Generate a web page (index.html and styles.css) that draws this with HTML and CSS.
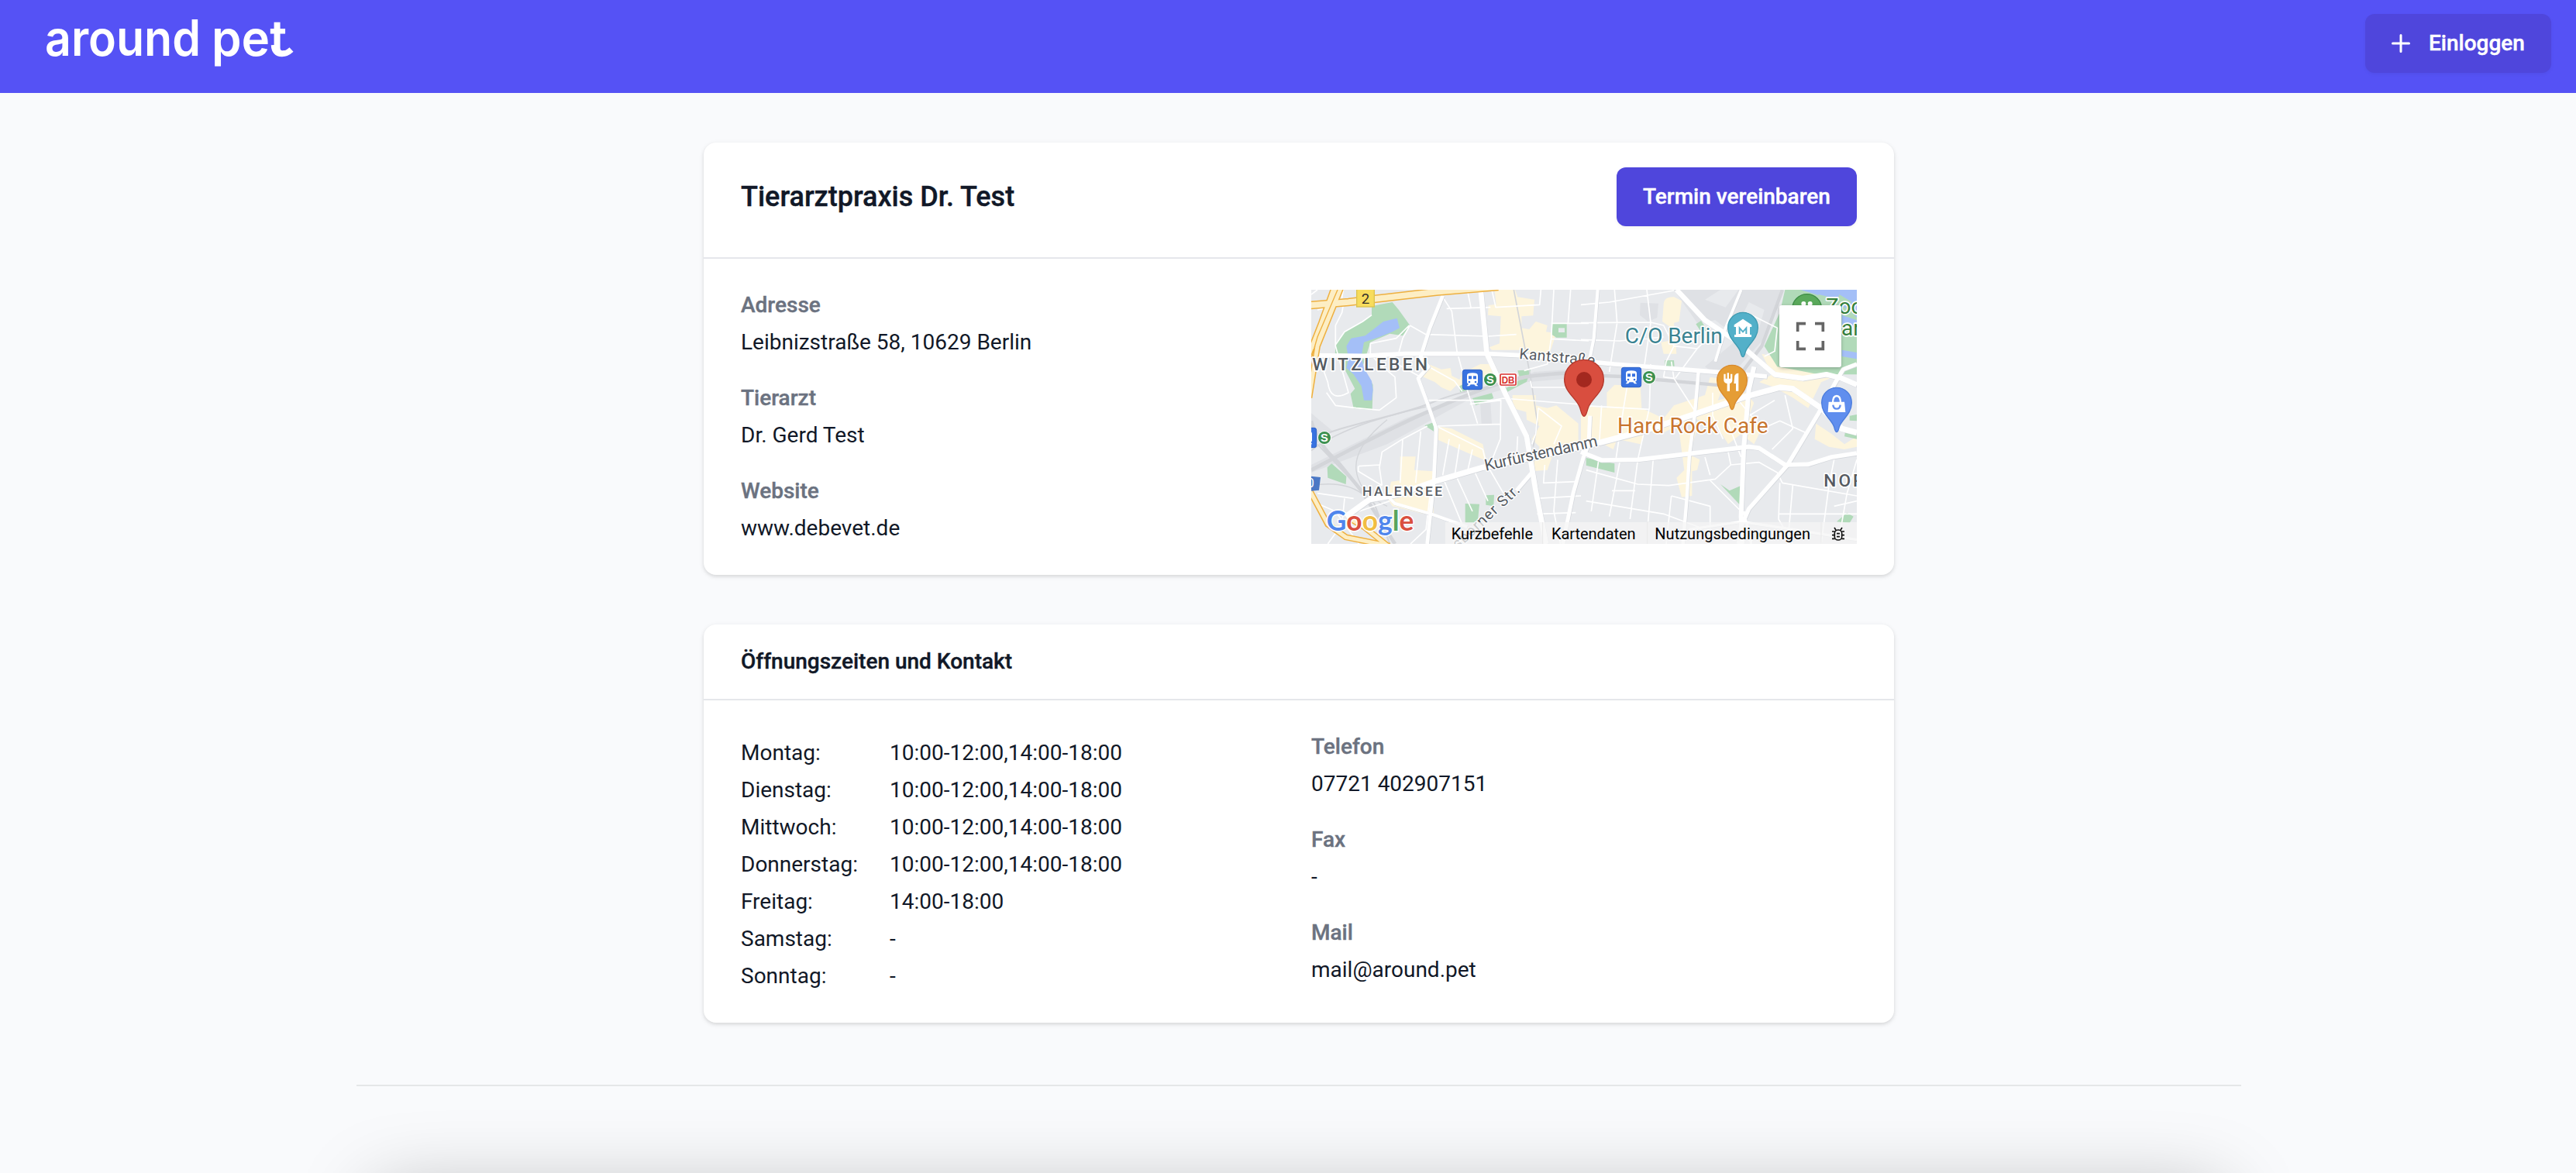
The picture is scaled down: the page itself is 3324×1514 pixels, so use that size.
FILE: index.html
```html
<!DOCTYPE html>
<html lang="de">
<head>
<meta charset="utf-8">
<title>around pet – Tierarztpraxis Dr. Test</title>
<link rel="stylesheet" href="styles.css">
</head>
<body>
<header class="topbar">
  <a class="brand" aria-label="around pet">
    <svg class="brand-logo" viewBox="0 0 340 100">
      <text x="-2" y="72" textLength="201" lengthAdjust="spacingAndGlyphs">around</text>
      <text x="213" y="72" textLength="97" lengthAdjust="spacingAndGlyphs">pet</text>
      <path d="M293.500 58Q294 69 304 69.500Q310 69.500 316 64"/>
    </svg>
  </a>
  <button class="btn btn-login">
    <svg class="plus" viewBox="0 0 24 24"><path d="M12 1.500V22.500M1.500 12H22.500"/></svg>
    Einloggen
  </button>
</header>
<main class="content">
  <section class="card">
    <div class="card-head card-head-main">
      <h1>Tierarztpraxis Dr. Test</h1>
      <button class="btn">Termin vereinbaren</button>
    </div>
    <div class="card-body">
      <dl class="facts">
        <div><dt>Adresse</dt><dd>Leibnizstraße 58, 10629 Berlin</dd></div>
        <div><dt>Tierarzt</dt><dd>Dr. Gerd Test</dd></div>
        <div><dt>Website</dt><dd>www.debevet.de</dd></div>
      </dl>
      <svg class="map" viewBox="36 42 2112 984">
        <defs>
          <path id="pin" d="M0 86C-6 86-7 76-10 66C-18 38-58 18-58-28A58 58 0 0 1 58-28C58 18 18 38 10 66C7 76 6 86 0 86Z"/>
          <g id="rail-stop">
            <rect width="76" height="76" rx="9" fill="#3872e0" stroke="#2a5fc8" stroke-width="3"/>
            <path fill="#fff" fill-rule="evenodd" d="M17 22Q17 12 38 12Q59 12 59 22V48Q59 54 53 55L60 63H50L45 57H31L26 63H16L23 55Q17 54 17 48ZM23 24V36H35V24ZM41 24V36H53V24ZM26 43A4 4 0 1 0 26 51A4 4 0 1 0 26 43ZM50 43A4 4 0 1 0 50 51A4 4 0 1 0 50 43Z"/>
          </g>
          <g id="sbahn">
            <circle r="27" fill="#fff"/><circle r="24" fill="#3c904f"/>
            <text class="s-sign" y="16" text-anchor="middle">S</text>
          </g>
          <path id="mw-b2" d="M20 103L180 90L330 72L520 50L760 30"/>
          <g id="mw-a100">
            <path d="M125 32L75 170L24 300M152 32L60 260L28 460M140 32L40 270"/>
            <path d="M20 800L100 950L170 1000L340 1034M190 930L240 960L330 1032"/>
          </g>
        </defs>
        <rect x="36" y="42" width="2112" height="984" fill="#e8eaed"/>

        <!-- rail yards and built-up blocks -->
        <path fill="#dfe1e5" d="M36 520L120 590L36 650ZM36 720L400 540L900 360L1040 350V385L870 400L640 470L330 640L36 750ZM690 480L730 480L735 560L695 560Z"/>
        <path fill="#dfe1e5" d="M1440 42H1860L1800 220L1700 330L1640 400L1560 340L1690 230L1600 160L1530 170Z"/>
        <path fill="#e8eaed" d="M1560 80L1640 110L1690 42H1620ZM1730 90L1790 120L1770 190L1700 150Z"/>
        <path fill="#dfe1e5" d="M1310 92L1380 95L1375 150L1340 165L1308 140Z"/>
        <g fill="#fdf5dd">
          <path d="M745 42H825L835 70L900 80L895 142L850 145L850 190L880 195L905 165L950 180L945 205L985 210L965 270L950 300L840 275H735L725 265L765 250L770 145L720 140L722 102L752 98Z"/>
          <path d="M490 330L540 350L575 345L580 375L610 390L620 365L690 330L725 330L740 370L700 380L700 435L620 430L600 410L575 435L540 420L515 400L460 375Z"/>
          <path d="M815 450H905V490L950 500L985 490L1070 560V640L985 640L950 740L885 745L920 650L890 620L920 570L870 545L868 515L815 500Z"/>
          <path d="M520 570L580 580L700 640L715 705L610 660L520 620ZM380 688H440L435 740L510 745V905L470 910L350 880L330 850L345 785L380 780Z"/>
          <path d="M1400 100Q1400 68 1440 70L1470 85L1460 165L1440 170L1450 290L1400 290L1390 245L1420 240L1430 190L1395 165Z"/>
          <path d="M1180 500V440L1210 410L1310 415L1315 500L1400 540L1440 490L1560 450L1580 380L1640 390L1610 470L1720 440L1750 480L1730 530L1780 580L1750 640L1700 600L1650 640L1600 560L1510 540L1390 600L1330 590L1310 640L1220 620L1205 660L1150 630L1080 650V490Z"/>
          <path d="M1460 590L1530 580L1500 680L1540 700L1530 740L1510 745L1510 840L1470 845L1450 770L1480 740Z"/>
          <path d="M1780 290L1870 310L1930 345L2080 370L2010 400L1960 500L1900 460L1830 420L1770 400L1820 370Z"/>
          <path d="M1990 560L2050 600L2100 640L2148 610V650L2100 660L2040 650L1985 620Z"/>
        </g>
        <g fill="#b1dab9">
          <path d="M270 105L350 90L375 120L418 180L390 220L340 212L265 245L235 340L275 410L272 508L200 502L188 445L205 425L160 340L128 300L130 250L165 205L235 165L270 140Z"/>
          <path d="M970 174H1025V227H985L967 215Z"/>
          <path d="M610 415L650 395L650 430L612 438ZM660 462L735 442L742 462L672 490ZM835 355L885 352L870 398L790 440L780 430L845 390ZM475 568L510 555V590ZM98 730L115 715L172 765L170 795L100 770ZM632 870L687 872L680 945H632ZM712 838L744 836L742 880L712 875Z"/>
          <path d="M1405 315H1440L1442 338H1405ZM1525 175L1545 162L1570 200L1545 205ZM1100 693L1210 715L1210 750L1100 722ZM1620 795L1655 820L1700 800V880ZM1850 130L1870 42H2148V370L2000 370L1900 350L1840 340L1790 260ZM2105 580L2148 590V620L2100 610ZM2120 530L2148 525V550L2120 548ZM2070 940L2110 905L2135 920L2120 945Z"/>
        </g>
        <g fill="#a4bff7">
          <path d="M368 152L378 190L350 205L300 225L240 245L230 300L240 345L270 395L275 430L270 470L240 470L230 415L200 370L172 345L180 310L172 260L190 230L245 220L315 165Z"/>
          <path d="M1930 42H2148V150L2120 120L2040 80L1990 60ZM2090 140L2148 160V200L2090 180ZM2090 275L2148 285V310L2090 300Z"/>
        </g>
        <g fill="#b1dab9"><path d="M2000 60L2050 72L2020 110L1985 95ZM2080 60L2130 90L2060 120Z"/></g>
        <rect x="993" y="190" width="24" height="17" fill="#e8eaed"/>

        <!-- railway lines -->
        <g fill="none" stroke="#d3d5d9" stroke-width="8">
          <path d="M36 740C300 600 460 520 640 450S860 372 1080 362" stroke-width="14"/>
          <path d="M36 625C160 560 350 540 500 480S700 430 860 385" stroke-width="6"/>
          <path d="M36 665C160 570 370 520 480 495" stroke-width="5"/>
          <path d="M36 550Q60 640 140 710L230 820L360 1026" stroke-width="14"/>
          <path d="M60 640L280 870L340 1026" stroke-width="6"/>
          <path d="M330 545Q200 650 210 740T330 880M36 800Q160 780 230 830" stroke-width="4"/>
          <path d="M820 42L885 380L912 560L895 650" stroke-width="5"/>
          <path d="M1080 372L1240 378L1620 412L1690 380L1780 260L1860 42" stroke-width="13"/>
        </g>

        <!-- minor streets -->
        <g class="street">
          <path d="M160 100L155 130L130 180V260L180 440Q110 480 100 400L75 330M160 42L150 100L60 120M270 140L235 165L165 205L130 255M415 180L365 230L265 250V290L300 330L360 380L365 460L300 508L210 500L130 490L95 440M418 180L390 230L375 285M418 180L480 215L720 222M545 70L580 125L600 280L640 430L680 560M560 115L730 110M640 42L655 115M735 42L750 110L920 100L925 42M975 42L965 230L950 330L860 355M965 172H1110M965 232L1110 240M1040 42L1030 172M720 222L830 215"/>
          <path d="M490 340L590 395L620 435M460 380L370 330M490 470H740L780 462L1000 480L1070 485M885 395L890 420H1020M915 500L905 600L890 640M915 500L1005 570L975 640M650 485L770 470L768 620L740 690M520 570L770 562M520 570L700 660L710 700M485 570L390 620L310 670L300 730L310 800M390 620L380 790M460 590L440 790M570 620L545 760M610 640L590 770M660 660L640 750M220 725L300 720M218 725V745L310 800M60 830L200 850M165 850L155 950L100 1026M60 870L130 900L220 1026M36 60L60 42M835 610L830 710M940 720L935 790L1060 785M905 850L1080 840M910 910L1060 905M990 700L975 900L1000 1026M500 800L480 970L420 1026M550 780L620 950M600 770L660 900M670 750L720 860M725 735L780 830M340 860L220 900"/>
          <path d="M1080 100L1190 90L1440 45M1080 170L1350 168L1400 180M1080 235L1230 240L1400 225M1210 42L1220 170L1190 360M1335 42L1350 170L1325 340M1400 180L1440 260L1530 270L1580 220M1440 260L1410 320L1400 380L1440 385L1430 320M1350 330L1345 500L1300 700M1440 385L1520 510M1265 380L1245 500L1215 700M1080 490L1345 505M1160 490L1150 650M1445 385L1530 270M1720 130L1840 190L1830 280L1790 300M1690 470L1780 580L1850 550L1960 600M1730 530L1830 470M1870 450L1900 580L1820 660M1650 560L1700 690M1100 740L1300 795L1420 800L1600 775L1660 720L1770 710L1840 750L1860 790L2148 840M1150 690L1120 900M1230 710L1190 920M1300 700L1270 930M1360 695L1340 940M1200 820H1290M1100 860L1400 910L1560 970L1700 1000M1430 840L1410 1026M1430 840L1580 880V970M1580 780L1700 900M1560 690L1580 760M1650 670L1660 720M1900 800L1880 1026M1850 790L1845 930L1900 1026M1845 910H2148M2060 700L2040 800L2010 1026M2148 700L2110 830L2080 1000M2148 860L2060 880M1590 440V530L1630 620"/>
        </g>

        <!-- arterial roads, white with a soft casing -->
        <g class="road-case"><use href="#arterials"/></g>
        <g class="road">
          <g id="arterials">
            <path d="M36 296L240 298L400 290L720 290L840 296L1100 320L1210 330L1660 365L1800 378" stroke-width="17"/>
            <path d="M692 42L716 290L790 450L870 610L905 820L945 1026" stroke-width="20"/>
            <path d="M545 65L495 190L460 300L490 340L450 385L485 480L520 580L510 790L485 1026" stroke-width="14"/>
            <path d="M170 920L260 855L370 835L510 785L700 730L900 690L1160 632L1320 590L1500 530L1720 455L1850 420L1900 425L2010 500L2090 580L2148 595" stroke-width="22"/>
            <path d="M340 850L360 870L500 910L640 960" stroke-width="12"/>
            <path d="M890 750L830 820M640 980L600 1026" stroke-width="15"/>
            <path d="M1115 530L1110 640L1090 690L1050 830L1010 1026" stroke-width="15"/>
            <path d="M1145 42L1130 230L1110 330" stroke-width="12"/>
            <path d="M1450 42L1560 160L1680 240L1760 310L1830 370L1940 385L2030 370L2090 385L2148 410" stroke-width="20"/>
            <path d="M1700 42L1640 190L1600 320" stroke-width="11"/>
            <path d="M1535 360L1520 530L1500 680L1490 850L1475 1026" stroke-width="13"/>
            <path d="M1750 340L1730 430L1710 660L1700 920L1705 1026" stroke-width="18"/>
            <path d="M1080 670L1160 702L1300 700L1730 650L1770 655L1870 720L1960 718L2050 690L2148 675" stroke-width="17"/>
            <path d="M2148 330L2095 350L2060 410L2000 520L1880 720L1730 890L1700 960L1690 1026" stroke-width="16"/>
            <path d="M1710 900L1740 1026M1500 970L1700 940L1900 970L2148 1010" stroke-width="10"/>
          </g>
        </g>

        <!-- motorways: amber edge below, pale surface on top -->
        <g fill="none" stroke="#eeb040">
          <use href="#mw-b2" stroke-width="32"/>
          <use href="#mw-a100" stroke-width="24"/>
        </g>
        <g fill="none" stroke="#fdeec4">
          <use href="#mw-b2" stroke-width="23"/>
          <use href="#mw-a100" stroke-width="15"/>
        </g>
        <path d="M138 42L60 225L30 330" fill="none" stroke="#eeb040" stroke-width="4"/>

        <!-- street and district names -->
        <g class="halo district">
          <text x="40" y="354" font-size="68" textLength="446">WITZLEBEN</text>
          <text x="234" y="840" font-size="52" textLength="309">HALENSEE</text>
          <text x="2020" y="805" font-size="68" letter-spacing="9">NORD</text>
        </g>
        <g class="halo street-name">
          <text transform="translate(840 309) rotate(5)" font-size="58" textLength="294">Kantstraße</text>
          <text transform="translate(712 743) rotate(-12.500)" font-size="62" textLength="446">Kurfürstendamm</text>
          <text transform="translate(604 1048) rotate(-43)" font-size="58" textLength="332">sborner Str.</text>
        </g>
        <g class="halo poi">
          <text x="1250" y="248" textLength="378" fill="#3a8391">C/O Berlin</text>
          <text x="1221" y="597" textLength="584" fill="#c8752e">Hard Rock Cafe</text>
          <text x="2028" y="134" fill="#36803c">Zoo</text>
          <text x="2088" y="219" fill="#36803c">arten</text>
        </g>

        <!-- shields and stops -->
        <rect x="212" y="36" width="68" height="72" fill="#f7dc5c" stroke="#dcc34e" stroke-width="4"/>
        <text x="246" y="95" class="shield" text-anchor="middle">2</text>
        <use href="#rail-stop" x="622" y="352"/>
        <use href="#sbahn" x="729" y="390"/>
        <rect x="763" y="364" width="70" height="52" rx="6" fill="#fff"/>
        <rect x="768" y="369" width="60" height="42" rx="3" fill="#fff" stroke="#d8302f" stroke-width="5"/>
        <text x="798" y="404" class="db-sign" text-anchor="middle" textLength="50" lengthAdjust="spacingAndGlyphs">DB</text>
        <use href="#rail-stop" x="-20" y="577"/>
        <use href="#sbahn" x="87" y="615"/>
        <path d="M30 764L72 768L66 818L30 822Z" fill="#4a78c5"/>
        <text x="20" y="808" class="route-sign">0</text>
        <use href="#rail-stop" x="1237" y="343"/>
        <use href="#sbahn" x="1344" y="381"/>

        <!-- place pins -->
        <g stroke-width="4">
          <use href="#pin" x="1707" y="216" fill="#53b0c9" stroke="#3f9bb1"/>
          <use href="#pin" x="1665" y="420" fill="#e59d35" stroke="#d98a2d"/>
          <use href="#pin" x="2070" y="507" fill="#608eee" stroke="#4c7ddd"/>
          <circle cx="1955" cy="116" r="57" fill="#5aa95b" stroke="#3d8c45"/>
          <path fill="#d94e3f" stroke="#b4392d" d="M1092 532C1084 532 1082 518 1077 502C1066 462 1016 442 1016 389A76 76 0 0 1 1168 389C1168 442 1118 462 1107 502C1102 518 1100 532 1092 532Z"/>
        </g>
        <circle cx="1092" cy="390" r="30" fill="#a3281f"/>
        <g fill="#fff">
          <path d="M1707 155L1741 178V186H1734V216H1740V225H1674V216H1680V186H1673V178Z"/>
          <path d="M1694 213V190L1707 205L1720 190V213" fill="none" stroke="#53b0c9" stroke-width="6"/>
          <path d="M1633 368H1640V386H1646V364H1653V386H1659V368H1666V392Q1666 402 1656 405V435H1646V405Q1633 402 1633 392ZM1675 374Q1680 364 1690 365V434H1680V405H1672Z"/>
          <path d="M2039 476H2100L2104 516H2036Z"/>
          <path d="M2055 480Q2055 453 2070 453T2085 480" fill="none" stroke="#fff" stroke-width="7"/>
          <path d="M2056 488Q2057 503 2070 503T2084 488" fill="none" stroke="#608eee" stroke-width="7"/>
          <circle cx="1942" cy="96" r="9"/><circle cx="1967" cy="96" r="9"/>
        </g>

        <!-- full-screen control -->
        <rect x="1848" y="102" width="240" height="240" rx="9" class="control"/>
        <path d="M1919 204V173H1950M1986 173H2017V204M2017 240V271H1986M1950 271H1919V240" fill="none" stroke="#666" stroke-width="11"/>

        <g class="google">
          <text x="95" y="976" textLength="338" lengthAdjust="spacingAndGlyphs"><tspan fill="#5086ec">G</tspan><tspan fill="#d94f3f">o</tspan><tspan fill="#f1bd42">o</tspan><tspan fill="#5086ec">g</tspan><tspan fill="#58a55c">l</tspan><tspan fill="#d94f3f">e</tspan></text>
        </g>

        <!-- attribution bar -->
        <rect x="555" y="942" width="1593" height="84" fill="#f5f5f5" fill-opacity=".72"/>
        <path d="M932 942V1026M1337 942V1026M2010 942V1026" stroke="#e9e9e9" stroke-width="3"/>
        <g class="legal">
          <text x="578" y="1007" textLength="316">Kurzbefehle</text>
          <text x="966" y="1007" textLength="326">Kartendaten</text>
          <text x="1366" y="1007" textLength="602">Nutzungsbedingungen</text>
        </g>
        <g fill="none" stroke="#111" stroke-width="5">
          <rect x="2062" y="972" width="28" height="39" rx="13"/>
          <path d="M2068 974L2061 963M2084 974L2091 963M2052 978H2063M2089 978H2100M2052 992H2063M2089 992H2100M2052 1006H2063M2089 1006H2100M2070 986H2082M2070 998H2082"/>
        </g>
      </svg>
    </div>
  </section>

  <section class="card">
    <div class="card-head">
      <h2>Öffnungszeiten und Kontakt</h2>
    </div>
    <div class="card-body">
      <div class="hours">
        <span>Montag:</span><span>10:00-12:00,14:00-18:00</span>
        <span>Dienstag:</span><span>10:00-12:00,14:00-18:00</span>
        <span>Mittwoch:</span><span>10:00-12:00,14:00-18:00</span>
        <span>Donnerstag:</span><span>10:00-12:00,14:00-18:00</span>
        <span>Freitag:</span><span>14:00-18:00</span>
        <span>Samstag:</span><span>-</span>
        <span>Sonntag:</span><span>-</span>
      </div>
      <dl class="facts">
        <div><dt>Telefon</dt><dd>07721 402907151</dd></div>
        <div><dt>Fax</dt><dd>-</dd></div>
        <div><dt>Mail</dt><dd>mail@around.pet</dd></div>
      </dl>
    </div>
  </section>
</main>
<footer class="footer"><div class="footer-panel"></div></footer>
</body>
</html>
```

FILE: styles.css
```css
* { box-sizing: border-box; margin: 0; }

body {
  height: 1514px;
  overflow: hidden;
  background: #f9fafc;
  color: #111827;
  font: 28px/40px Roboto, "Liberation Sans", sans-serif;
}

.topbar {
  display: flex;
  justify-content: space-between;
  align-items: flex-start;
  height: 120px;
  padding: 0 32px 0 60px;
  background: #5552f5;
}
.brand { display: block; height: 100px; }
.brand-logo { display: block; width: 340px; height: 100px; fill: #fff; overflow: visible; }
.brand-logo text { font: 600 64px Inter, "Liberation Sans", sans-serif; }
.brand-logo path { fill: none; stroke: #fff; stroke-width: 7.5; }

.btn {
  display: flex;
  align-items: center;
  justify-content: center;
  height: 76px;
  width: 310px;
  border: 0;
  border-radius: 12px;
  background: #4f46dc;
  color: #fff;
  font: 500 28px/40px Roboto, "Liberation Sans", sans-serif;
  white-space: nowrap;
  box-shadow: 0 2px 4px rgba(0, 0, 0, .05);
}
.btn-login { width: 240px; gap: 24px; margin-top: 18px; }
.plus { width: 24px; height: 24px; fill: none; stroke: #fff; stroke-width: 3; stroke-linecap: round; }

.content {
  display: flex;
  flex-direction: column;
  gap: 64px;
  width: 1536px;
  margin: 64px 0 0 908px;
}
.card {
  border-radius: 16px;
  background: #fff;
  box-shadow: 0 2px 6px rgba(0, 0, 0, .1), 0 2px 4px rgba(0, 0, 0, .06);
}
.card-head {
  display: flex;
  align-items: center;
  justify-content: space-between;
  height: 98px;
  padding: 0 48px;
  border-bottom: 2px solid #e5e7eb;
}
.card-head-main { height: 150px; padding-bottom: 8px; }
h1 { font-size: 36px; font-weight: 500; }
h2 { font-size: 28px; font-weight: 500; }
h1, h2, dt, .btn { -webkit-text-stroke: .4px currentColor; }

.card-body {
  display: grid;
  grid-template-columns: 704px 704px;
  column-gap: 32px;
  padding: 40px 48px;
}
.facts { display: flex; flex-direction: column; gap: 32px; }
dt { color: #6b7280; font-weight: 500; }
dd { margin-top: 8px; }
.hours { display: grid; grid-template-columns: 192px 1fr; }
.hours span { padding-top: 8px; }

.map { display: block; width: 704px; height: 328px; font-family: Roboto, "Liberation Sans", sans-serif; }
.street { fill: none; stroke: #fff; stroke-width: 5; stroke-linejoin: round; }
.road { fill: none; stroke: #fff; stroke-linejoin: round; }
.road-case { fill: none; stroke: #d5d8dd; stroke-linejoin: round; transform: translate(2px, 2px); }
.halo { paint-order: stroke; stroke: #fff; stroke-width: 10; stroke-linejoin: round; }
.district { fill: #555a61; font-weight: 500; }
.street-name { fill: #565b62; stroke-width: 8; }
.poi { font-size: 84px; }
.shield { font-size: 56px; fill: #33312a; }
.s-sign { fill: #fff; font: 700 44px "Liberation Sans", sans-serif; }
.db-sign { fill: #d8302f; font: 700 36px "Liberation Sans", sans-serif; }
.route-sign { fill: #fff; font-size: 48px; }
.control { fill: #fff; filter: drop-shadow(0 4px 6px rgba(0, 0, 0, .25)); }
.google { font: 700 111px Lato, sans-serif; paint-order: stroke; stroke: #fff; stroke-width: 9; }
.legal { font-size: 60px; fill: #000; }

.footer {
  width: 2432px;
  margin: 80px 0 0 460px;
  padding-top: 112px;
  border-top: 2px solid #e5e7e8;
}
.footer-panel { height: 300px; box-shadow: 0 0 100px -24px rgba(0, 0, 0, .27); }
```
